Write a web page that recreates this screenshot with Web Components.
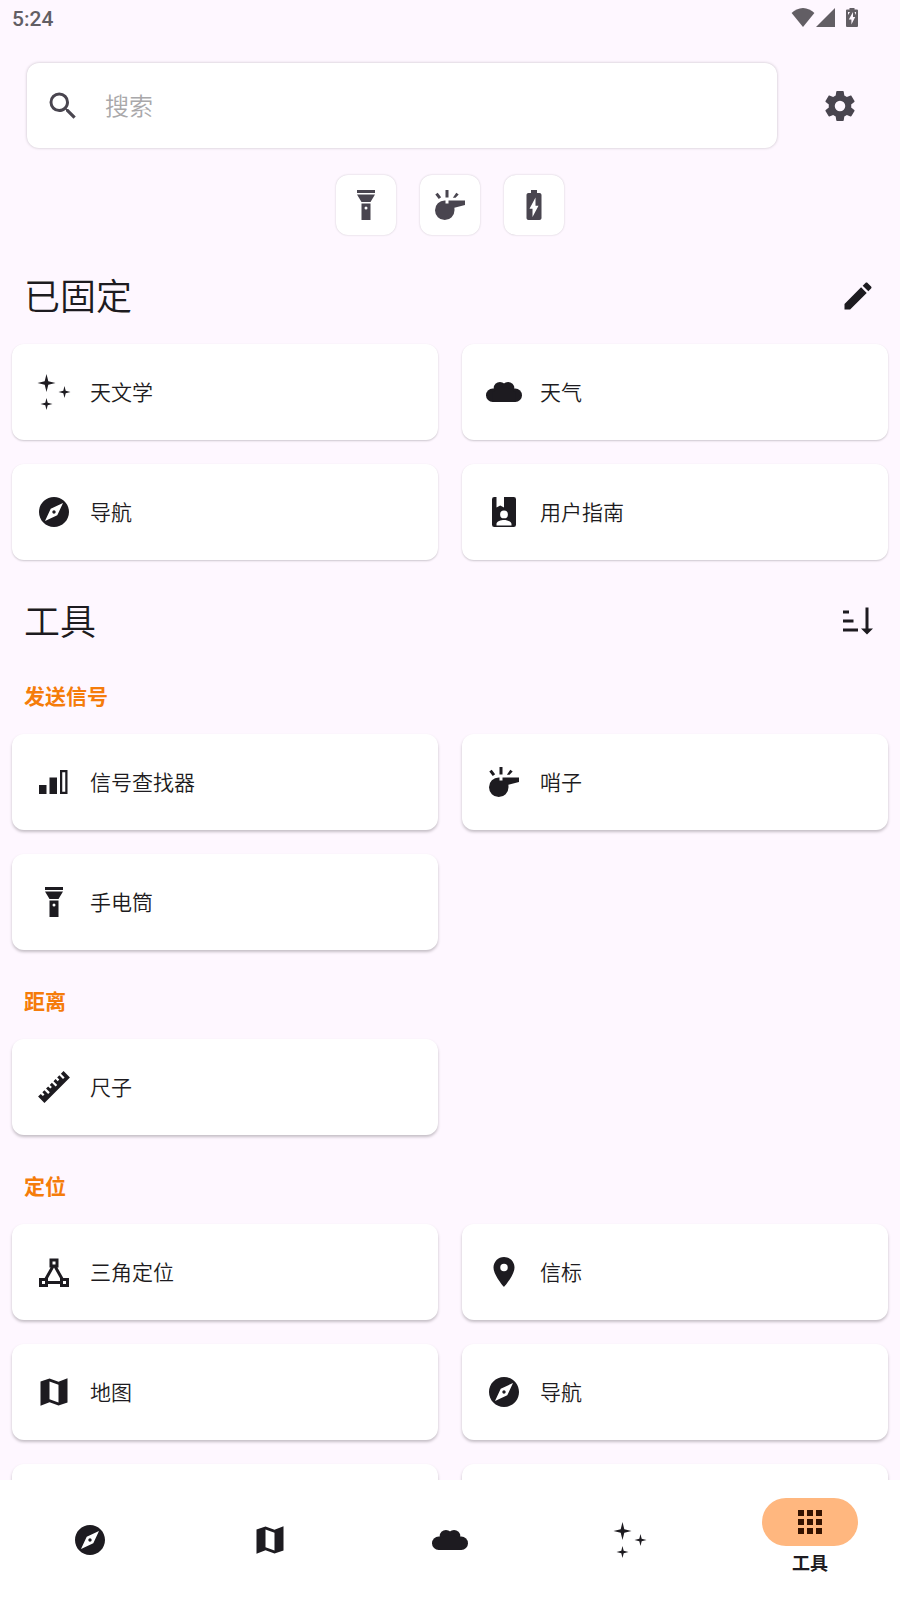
<!DOCTYPE html>
<html lang="zh-CN">
<head>
<meta charset="utf-8">
<meta name="viewport" content="width=device-width, initial-scale=1">
<title>工具</title>
<style>
  html, body { margin: 0; height: 100%; }
  body {
    --surface: #fef7ff;
    --card: #ffffff;
    --ink: #1d1b20;
    --ink-soft: #49454f;
    --accent: #f57c0a;
    background: var(--surface);
    color: var(--ink);
    font-family: Roboto, "Noto Sans CJK SC", sans-serif;
  }
</style>
</head>
<body>
<tools-app></tools-app>

<template id="tpl-app">
  <style>
    :host { display: flex; flex-direction: column; height: 100vh; }
    main { flex: 1; min-height: 0; overflow-y: auto; scrollbar-width: none; }
    .top { display: flex; align-items: center; gap: 27px; padding: 27px 24px 0 27px; }
    .top search-field { flex: 1; }
    .quick { display: flex; justify-content: center; gap: 24px; padding-top: 27px; }
    .pinned { --shadow: 0 1px 2px rgba(29, 27, 32, .22); }
    .pinned tool-grid { padding-top: 24px; }
    .tools { --shadow: 0 2px 3px rgba(29, 27, 32, .26); }
  </style>
  <status-bar></status-bar>
  <main>
    <div class="top">
      <search-field></search-field>
      <icon-button icon="cog" label="设置" tone="soft"></icon-button>
    </div>
    <div class="quick">
      <quick-action icon="flashlight" label="手电筒"></quick-action>
      <quick-action icon="whistle" label="哨子"></quick-action>
      <quick-action icon="battery" label="电池"></quick-action>
    </div>
    <section class="pinned">
      <section-title>已固定<icon-button slot="action" icon="pencil" label="编辑"></icon-button></section-title>
      <tool-grid>
        <tool-card icon="stars">天文学</tool-card>
        <tool-card icon="cloud">天气</tool-card>
        <tool-card icon="compass">导航</tool-card>
        <tool-card icon="guide">用户指南</tool-card>
      </tool-grid>
    </section>
    <section class="tools">
      <section-title>工具<icon-button slot="action" icon="sort" label="排序"></icon-button></section-title>
      <category-title>发送信号</category-title>
      <tool-grid>
        <tool-card icon="signal">信号查找器</tool-card>
        <tool-card icon="whistle">哨子</tool-card>
        <tool-card icon="flashlight">手电筒</tool-card>
      </tool-grid>
      <category-title>距离</category-title>
      <tool-grid>
        <tool-card icon="ruler">尺子</tool-card>
      </tool-grid>
      <category-title>定位</category-title>
      <tool-grid>
        <tool-card icon="triangle">三角定位</tool-card>
        <tool-card icon="pin">信标</tool-card>
        <tool-card icon="map">地图</tool-card>
        <tool-card icon="compass">导航</tool-card>
        <tool-card></tool-card>
        <tool-card></tool-card>
      </tool-grid>
    </section>
  </main>
  <nav-bar>
    <nav-item icon="compass" label="导航"></nav-item>
    <nav-item icon="map" label="地图"></nav-item>
    <nav-item icon="cloud" label="天气"></nav-item>
    <nav-item icon="stars" label="天文学"></nav-item>
    <nav-item icon="apps" label="工具" active>工具</nav-item>
  </nav-bar>
</template>

<template id="tpl-status">
  <style>
    :host { display: flex; align-items: center; height: 36px; padding: 0 42px 0 12px; color: #625e64; font-size: 21px; line-height: 34px; font-weight: 500; }
    time { flex: 1; padding-top: 2px; }
    svg { display: block; height: 20px; fill: currentColor; }
    .wifi { width: 24px; margin-right: 1px; }
    .cell { width: 20px; margin-right: 10px; }
    .batt { width: 12px; }
  </style>
  <time>5:24</time>
  <svg class="wifi" viewBox="0 0 24 20"><path d="M12 19 .6 5C3.600 2.200 7.600 0 12 0s8.400 2.200 11.400 5z"/></svg>
  <svg class="cell" viewBox="0 0 20 20"><path d="M19 0v19H0z"/></svg>
  <svg class="batt" viewBox="0 0 12 20"><path fill-rule="evenodd" d="M3.500 0h5v1.500H11a1 1 0 0 1 1 1V18a1 1 0 0 1-1 1H1a1 1 0 0 1-1-1V2.500a1 1 0 0 1 1-1h2.500zM7 4 2.800 11.500H5.400V16.500L9.200 9H7zM2 4v3l2-3zM8.500 4l1.500 3V4z"/></svg>
</template>

<template id="tpl-search">
  <style>
    :host { display: block; }
    label { display: flex; align-items: center; gap: 24px; box-sizing: border-box; height: 85px; padding: 0 18px;
      background: var(--card); border-radius: 12px; box-shadow: 0 0 3px rgba(29, 27, 32, .26); }
    app-icon { color: var(--ink-soft); }
    input { flex: 1; min-width: 0; border: 0; outline: 0; padding: 2px 0 0; background: none; color: var(--ink); font: inherit; font-weight: 350; font-size: 24px; line-height: 36px; }
    input::placeholder { color: #a9a8aa; opacity: 1; }
  </style>
  <label><app-icon name="search"></app-icon><input type="search" placeholder="搜索" aria-label="搜索"></label>
</template>

<template id="tpl-icon-button">
  <style>
    :host { display: block; }
    button { display: grid; place-items: center; width: 72px; height: 48px; padding: 0; border: 0; background: none; color: var(--ink); cursor: pointer; }
    :host([tone="soft"]) button { color: var(--ink-soft); }
  </style>
  <button type="button"><app-icon></app-icon></button>
</template>

<template id="tpl-quick">
  <style>
    :host { display: block; }
    button { display: grid; place-items: center; width: 60px; height: 60px; padding: 0; border: 0; border-radius: 12px;
      background: var(--card); color: var(--ink-soft); box-shadow: 0 0 2px rgba(29, 27, 32, .22); cursor: pointer; }
  </style>
  <button type="button"><app-icon></app-icon></button>
</template>

<template id="tpl-section-title">
  <style>
    :host { display: flex; align-items: flex-end; justify-content: space-between; padding: 37px 6px 0 24px; }
    h1 { margin: 0; font-size: 36px; line-height: 44px; font-weight: 350; }
  </style>
  <h1><slot></slot></h1>
  <slot name="action"></slot>
</template>

<template id="tpl-category">
  <style>
    :host { display: block; padding: 36px 24px 21px; }
    h2 { margin: 0; color: var(--accent); font-size: 21px; line-height: 32px; font-weight: 700; }
  </style>
  <h2><slot></slot></h2>
</template>

<template id="tpl-grid">
  <style>
    :host { display: grid; grid-template-columns: 1fr 1fr; gap: 24px; padding: 0 12px; }
  </style>
  <slot></slot>
</template>

<template id="tpl-card">
  <style>
    :host { display: block; }
    button { display: flex; align-items: center; gap: 18px; box-sizing: border-box; width: 100%; height: 96px; padding: 0 24px; border: 0; border-radius: 12px;
      background: var(--card); color: var(--ink); box-shadow: var(--shadow); font: inherit; font-size: 21px; line-height: 32px; font-weight: 350; text-align: start; cursor: pointer; }
    span { padding-top: 2px; }
  </style>
  <button type="button"><app-icon></app-icon><span><slot></slot></span></button>
</template>

<template id="tpl-nav">
  <style>
    :host { display: block; background: var(--card); }
    nav { display: grid; grid-template-columns: repeat(5, 1fr); height: 120px; }
  </style>
  <nav><slot></slot></nav>
</template>

<template id="tpl-nav-item">
  <style>
    :host { display: block; }
    a { display: flex; flex-direction: column; align-items: center; justify-content: center; box-sizing: border-box; height: 100%;
      color: var(--ink); text-decoration: none; font-size: 18px; line-height: 36px; font-weight: 700; }
    .pill { display: grid; place-items: center; width: 96px; height: 48px; border-radius: 24px; }
    :host([active]) a { justify-content: flex-start; padding-top: 18px; }
    :host([active]) .pill { background: #ffb77f; color: #331200; }
  </style>
  <a href="#"><span class="pill"><app-icon></app-icon></span><slot></slot></a>
</template>

<script>
  const ICONS = {
    search: '<path d="M9.500 3A6.500 6.500 0 0 1 16 9.500C16 11.110 15.410 12.590 14.440 13.730L14.710 14H15.500L20.500 19 19 20.500 14 15.500V14.710L13.730 14.440C12.590 15.410 11.110 16 9.500 16A6.500 6.500 0 0 1 9.500 3M9.500 5C7 5 5 7 5 9.500S7 14 9.500 14 14 12 14 9.500 12 5 9.500 5Z"/>',
    cog: '<path d="M12,15.500A3.500,3.500 0 0,1 8.500,12A3.500,3.500 0 0,1 12,8.500A3.500,3.500 0 0,1 15.500,12A3.500,3.500 0 0,1 12,15.500M19.430,12.970C19.470,12.650 19.500,12.330 19.500,12C19.500,11.670 19.470,11.340 19.430,11L21.540,9.370C21.730,9.220 21.780,8.950 21.660,8.730L19.660,5.270C19.540,5.050 19.270,4.960 19.050,5.050L16.560,6.050C16.040,5.660 15.500,5.320 14.870,5.070L14.500,2.420C14.460,2.180 14.250,2 14,2H10C9.750,2 9.540,2.180 9.500,2.420L9.130,5.070C8.500,5.320 7.960,5.660 7.440,6.050L4.950,5.050C4.730,4.960 4.460,5.050 4.340,5.270L2.340,8.730C2.210,8.950 2.270,9.220 2.460,9.370L4.570,11C4.530,11.340 4.500,11.670 4.500,12C4.500,12.330 4.530,12.650 4.570,12.970L2.460,14.630C2.270,14.780 2.210,15.050 2.340,15.270L4.340,18.730C4.460,18.950 4.730,19.030 4.950,18.950L7.440,17.940C7.960,18.340 8.500,18.680 9.130,18.930L9.500,21.580C9.540,21.820 9.750,22 10,22H14C14.250,22 14.460,21.820 14.500,21.580L14.870,18.930C15.500,18.670 16.040,18.340 16.560,17.940L19.050,18.950C19.270,19.030 19.540,18.950 19.660,18.730L21.660,15.270C21.780,15.050 21.730,14.780 21.540,14.630L19.430,12.970Z"/>',
    flashlight: '<path fill-rule="evenodd" d="M9 10 6 5H18L15 10ZM18 4H6V2H18ZM9 22V11H15V22ZM12 13A1 1 0 0 0 12 15 1 1 0 0 0 12 13Z"/>',
    whistle: '<path d="M8.500 9A6.500 6.500 0 1 0 15 15.500C15 14.900 15 14.300 14.900 13.800L22 12V9H11V11H9V9ZM9 2H11V7H9Z"/><path d="M2.200 5 3.800 3.800 6.100 6.800 4.500 8ZM16.200 3.800 17.800 5 15.700 7.200H13.900Z"/>',
    battery: '<path fill-rule="evenodd" d="M15.670 4H14V2h-4v2H8.330C7.600 4 7 4.600 7 5.330v15.340C7 21.400 7.600 22 8.330 22h7.340c.73 0 1.330-.6 1.330-1.330V5.330C17 4.600 16.400 4 15.670 4zM11 20v-5.500H9L13 7v5.500h2z"/>',
    pencil: '<path d="M3 17.250V21h3.750L17.810 9.940l-3.750-3.750zM20.710 7.040c.39-.39.39-1.020 0-1.410l-2.340-2.340c-.39-.39-1.020-.39-1.410 0l-1.830 1.830 3.750 3.750z"/>',
    sort: '<path d="M2 5H6V7H2ZM2 11H9V13H2ZM2 17H12V19H2ZM17 3H19V17H22L18 21 14 17H17Z"/>',
    stars: '<path d="M7 0 8.200 4.800 13 6 8.200 7.200 7 12 5.800 7.200 1 6 5.800 4.800ZM19 8 19.800 11.200 23 12 19.800 12.800 19 16 18.200 12.800 15 12 18.200 11.200ZM7 16 7.800 19.200 11 20 7.800 20.800 7 24 6.200 20.800 3 20 6.200 19.200Z"/>',
    cloud: '<circle cx="9.300" cy="9.500" r="4.200"/><circle cx="14.700" cy="9.500" r="4.200"/><circle cx="4.500" cy="14.200" r="4.500"/><circle cx="19.500" cy="14.200" r="4.500"/><path d="M4.500 18.700V12L9.300 9H14.700L19.500 12V18.700Z"/>',
    compass: '<path fill-rule="evenodd" d="M12 10.900c-.61 0-1.100.49-1.100 1.100s.49 1.100 1.100 1.100 1.100-.49 1.100-1.100-.49-1.100-1.100-1.100zM12 2C6.480 2 2 6.480 2 12s4.480 10 10 10 10-4.480 10-10S17.520 2 12 2zM14.190 14.190 6 18l3.810-8.190L18 6z"/>',
    guide: '<path fill-rule="evenodd" d="M5.500 2H7V9L9.500 7.600 12 9V2H18.500A1.500 1.500 0 0 1 20 3.500V20.500A1.500 1.500 0 0 1 18.500 22H5.500A1.500 1.500 0 0 1 4 20.500V3.500A1.500 1.500 0 0 1 5.500 2ZM12 11A2.600 2.600 0 0 0 12 16.200 2.600 2.600 0 0 0 12 11ZM7 21H17V20C17 18.300 14 17.400 12 17.400S7 18.300 7 20Z"/>',
    signal: '<path fill-rule="evenodd" d="M2 14H7V20H2ZM9 9H14V20H9ZM16 4H21V20H16ZM17.500 5.500V18.500H19.500V5.500Z"/>',
    ruler: '<path d="M1.390,18.360L3.160,16.600L4.580,18L5.640,16.950L4.220,15.540L5.640,14.120L8.110,16.600L9.170,15.540L6.700,13.060L8.110,11.650L9.530,13.060L10.590,12L9.170,10.590L10.590,9.170L13.060,11.650L14.120,10.590L11.650,8.110L13.060,6.700L14.470,8.110L15.540,7.050L14.120,5.640L15.540,4.220L18,6.700L19.070,5.640L16.600,3.160L18.360,1.390L22.610,5.640L5.640,22.610Z"/>',
    triangle: '<path fill-rule="evenodd" d="M9,3V9H9.730L5.790,16H2V22H8V20H16V22H22V16H18.210L14.270,9H15V3ZM11,5H13V7H11ZM12,9.040L16,16.150V18H8V16.150ZM4,18H6V20H4ZM18,18H20V20H18Z"/>',
    pin: '<path fill-rule="evenodd" d="M12 2C8.130 2 5 5.130 5 9c0 5.250 7 13 7 13s7-7.750 7-13c0-3.870-3.130-7-7-7zM12 11.500a2.500 2.500 0 0 1 0-5 2.500 2.500 0 0 1 0 5z"/>',
    map: '<path fill-rule="evenodd" d="M15 5.100 9 3 3 5.020V21.220L9 18.890 15 21 21 18.980V2.780ZM15 18.990 9 16.880V5L15 7.110Z"/>',
    apps: '<path d="M4 4H8V8H4ZM10 4H14V8H10ZM16 4H20V8H16ZM4 10H8V14H4ZM10 10H14V14H10ZM16 10H20V14H16ZM4 16H8V20H4ZM10 16H14V20H10ZM16 16H20V20H16Z"/>'
  };

  class AppIcon extends HTMLElement {
    static observedAttributes = ['name'];
    constructor() { super(); this.attachShadow({ mode: 'open' }); }
    connectedCallback() { this.draw(); }
    attributeChangedCallback() { this.draw(); }
    draw() {
      this.shadowRoot.innerHTML =
        '<style>:host { display: block; flex: none; width: 36px; height: 36px; } svg { display: block; fill: currentColor; }</style>' +
        '<svg width="36" height="36" viewBox="0 0 24 24" aria-hidden="true">' + (ICONS[this.getAttribute('name')] || '') + '</svg>';
    }
  }
  customElements.define('app-icon', AppIcon);

  // Registers an element that clones a template and hands its icon and label on to the control inside.
  function define(tag, templateId) {
    customElements.define(tag, class extends HTMLElement {
      connectedCallback() {
        if (this.shadowRoot) return;
        const root = this.attachShadow({ mode: 'open' });
        root.append(document.getElementById(templateId).content.cloneNode(true));
        if (this.hasAttribute('icon')) root.querySelector('app-icon').setAttribute('name', this.getAttribute('icon'));
        if (this.hasAttribute('label')) root.querySelector('button, a').setAttribute('aria-label', this.getAttribute('label'));
        if (this.hasAttribute('active')) root.querySelector('a').setAttribute('aria-current', 'page');
      }
    });
  }
  define('status-bar', 'tpl-status');
  define('search-field', 'tpl-search');
  define('icon-button', 'tpl-icon-button');
  define('quick-action', 'tpl-quick');
  define('section-title', 'tpl-section-title');
  define('category-title', 'tpl-category');
  define('tool-grid', 'tpl-grid');
  define('tool-card', 'tpl-card');
  define('nav-bar', 'tpl-nav');
  define('nav-item', 'tpl-nav-item');
  define('tools-app', 'tpl-app');
</script>
</body>
</html>
